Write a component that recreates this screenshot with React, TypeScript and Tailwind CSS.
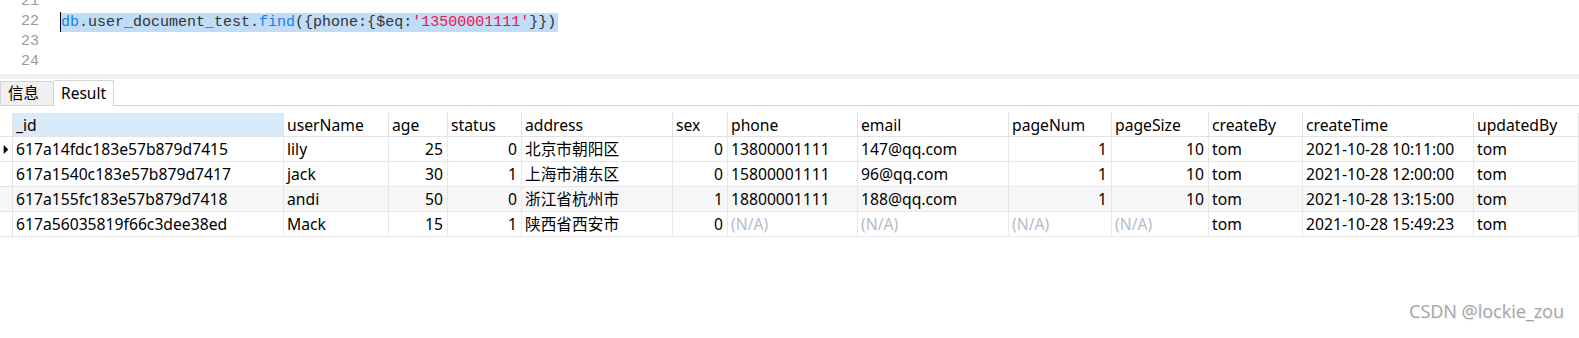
import React from "react";

const cols = [
  { name: "", w: 13 },
  { name: "_id", w: 271 },
  { name: "userName", w: 105 },
  { name: "age", w: 59 },
  { name: "status", w: 74 },
  { name: "address", w: 151 },
  { name: "sex", w: 55 },
  { name: "phone", w: 130 },
  { name: "email", w: 151 },
  { name: "pageNum", w: 103 },
  { name: "pageSize", w: 97 },
  { name: "createBy", w: 94 },
  { name: "createTime", w: 171 },
  { name: "updatedBy", w: 105 },
];

type Cell = { v: string; right?: boolean; na?: boolean };

const NA: Cell = { v: "(N/A)", na: true };

const rows: Cell[][] = [
  [
    { v: "617a14fdc183e57b879d7415" },
    { v: "lily" },
    { v: "25", right: true },
    { v: "0", right: true },
    { v: "北京市朝阳区" },
    { v: "0", right: true },
    { v: "13800001111" },
    { v: "147@qq.com" },
    { v: "1", right: true },
    { v: "10", right: true },
    { v: "tom" },
    { v: "2021-10-28 10:11:00" },
    { v: "tom" },
  ],
  [
    { v: "617a1540c183e57b879d7417" },
    { v: "jack" },
    { v: "30", right: true },
    { v: "1", right: true },
    { v: "上海市浦东区" },
    { v: "0", right: true },
    { v: "15800001111" },
    { v: "96@qq.com" },
    { v: "1", right: true },
    { v: "10", right: true },
    { v: "tom" },
    { v: "2021-10-28 12:00:00" },
    { v: "tom" },
  ],
  [
    { v: "617a155fc183e57b879d7418" },
    { v: "andi" },
    { v: "50", right: true },
    { v: "0", right: true },
    { v: "浙江省杭州市" },
    { v: "1", right: true },
    { v: "18800001111" },
    { v: "188@qq.com" },
    { v: "1", right: true },
    { v: "10", right: true },
    { v: "tom" },
    { v: "2021-10-28 13:15:00" },
    { v: "tom" },
  ],
  [
    { v: "617a56035819f66c3dee38ed" },
    { v: "Mack" },
    { v: "15", right: true },
    { v: "1", right: true },
    { v: "陕西省西安市" },
    { v: "0", right: true },
    NA,
    NA,
    NA,
    NA,
    { v: "tom" },
    { v: "2021-10-28 15:49:23" },
    { v: "tom" },
  ],
];

const tableFont = {
  fontFamily: '"Noto Sans", "Noto Sans CJK SC", sans-serif',
};

export default function App() {
  return (
    <div className="w-[1579px] h-[338px] bg-white relative overflow-hidden">
      {/* Editor */}
      <div className="h-[74px] overflow-hidden flex bg-white font-['Liberation_Mono',monospace] text-[15px]">
        <div className="w-[40px] -mt-[8px] flex flex-col items-end text-[#9a9a9a] pr-[1px]">
          <div className="h-[20px] leading-[20px]">21</div>
          <div className="h-[20px] leading-[20px]">22</div>
          <div className="h-[20px] leading-[20px]">23</div>
          <div className="h-[20px] leading-[20px]">24</div>
        </div>
        <div className="-mt-[8px] pl-[20px] flex flex-col">
          <div className="h-[20px]" />
          <div className="h-[20px] leading-[20px] flex items-center">
            <span className="w-[1px] h-[20px] bg-black" />
            <span className="bg-[#c0dcf7] h-[19px] leading-[19px] pr-[2px] whitespace-pre">
              <span className="text-[#1b7cf0]">db</span>
              <span className="text-[#333]">.user_document_test.</span>
              <span className="text-[#1b7cf0]">find</span>
              <span className="text-[#333]">({"{"}phone:{"{"}$eq:</span>
              <span className="text-[#f0124d]">'13500001111'</span>
              <span className="text-[#333]">{"}}"})</span>
            </span>
          </div>
          <div className="h-[20px]" />
          <div className="h-[20px]" />
        </div>
      </div>
      {/* Separator band */}
      <div className="h-[5px] bg-[#f0f0f0]" />
      {/* Tabs */}
      <div
        className="h-[27px] flex items-end border-b border-[#d4d4d4] text-[15.5px]"
        style={tableFont}
      >
        <div className="w-[54px] h-[24px] bg-[#f0f0f0] border border-b-0 border-[#d4d4d4] flex items-center pl-[7px] text-black">
          信息
        </div>
        <div className="w-[60px] h-[26px] bg-white border border-b-0 border-l-0 border-[#d4d4d4] flex items-center pl-[7px] text-black -mb-[1px] relative">
          Result
        </div>
      </div>
      <div className="h-[7px]" />
      {/* Table */}
      <div
        className="grid grid-cols-[13px_271px_105px_59px_74px_151px_55px_130px_151px_103px_97px_94px_171px_105px] text-[15.7px] text-black"
        style={tableFont}
      >
        {cols.map((c, i) => (
          <div
            key={"h" + i}
            className={
              "h-[24px] leading-[24px] border-r border-b border-[#e3e3e3] pl-[3px] whitespace-nowrap overflow-hidden " +
              (i === 1 ? "bg-[#d9eaf8]" : "bg-white")
            }
          >
            {c.name}
          </div>
        ))}
        {rows.map((r, ri) => (
          <React.Fragment key={"r" + ri}>
            <div
              className={
                "h-[25px] border-r border-b border-[#e3e3e3] flex items-center " +
                (ri === 2 ? "bg-[#f7f7f7]" : "bg-white")
              }
            >
              {ri === 0 && (
                <svg width="13" height="25" viewBox="0 0 13 25">
                  <polygon points="4,7.5 9,12.5 4,17.5" fill="#000" />
                </svg>
              )}
            </div>
            {r.map((c, ci) => (
              <div
                key={ci}
                className={
                  "h-[25px] leading-[24px] border-r border-b border-[#e8e8e8] whitespace-nowrap overflow-hidden " +
                  (c.right ? "text-right pr-[4px] " : "pl-[3px] ") +
                  (c.na ? "text-[#b4bccb] " : "") +
                  (ri === 2 ? "bg-[#f7f7f7]" : "bg-white")
                }
              >
                {c.v}
              </div>
            ))}
          </React.Fragment>
        ))}
      </div>
      {/* Watermark */}
      <div className="absolute right-[15px] bottom-[13px] text-[18px] text-[#a5a5a5] font-['Open_Sans',sans-serif] [text-shadow:0_0_1px_rgba(255,255,255,0.9),1px_1px_1px_rgba(0,0,0,0.08)]">
        CSDN @lockie_zou
      </div>
    </div>
  );
}
